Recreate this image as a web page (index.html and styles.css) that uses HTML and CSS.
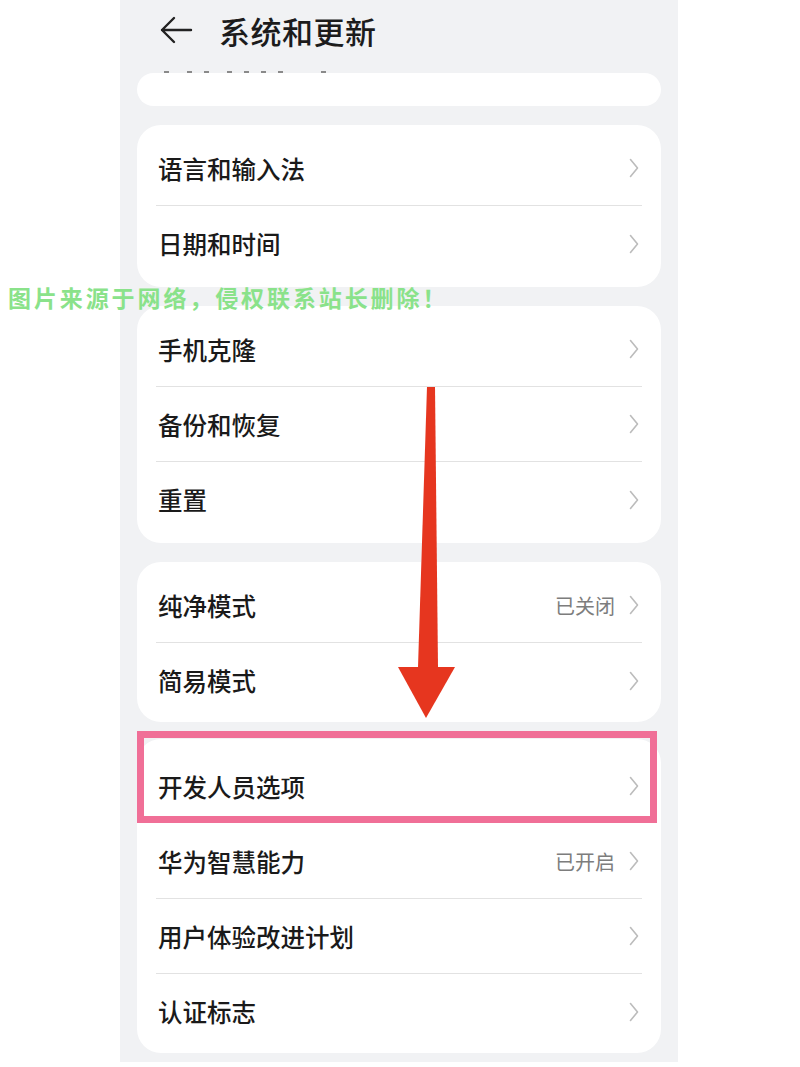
FILE: index.html
```html
<!DOCTYPE html>
<html lang="zh-CN">
<head>
<meta charset="utf-8">
<title>系统和更新</title>
<link rel="stylesheet" href="styles.css">
</head>
<body>
<div class="page">
  <div class="screen">
    <header class="header">
      <svg class="back" width="34" height="28" viewBox="0 0 34 28" aria-hidden="true">
        <path d="M32 14 H3 M15 2 L3 14 L15 26" fill="none" stroke="#222" stroke-width="2.4" stroke-linecap="round" stroke-linejoin="round"/>
      </svg>
      <h1 class="title">系统和更新</h1>
    </header>
    <div class="peek" aria-hidden="true">
      <i class="d"></i><i class="d gap"></i><i class="d"></i><i class="d gap"></i><i class="d"></i><i class="d"></i><i class="d"></i><i class="d gap2"></i>
    </div>
    <div class="card card-top"></div>

    <section class="card">
      <div class="row"><span class="label">语言和输入法</span><span class="chev"></span></div>
      <div class="row"><span class="label">日期和时间</span><span class="chev"></span></div>
    </section>

    <section class="card">
      <div class="row"><span class="label">手机克隆</span><span class="chev"></span></div>
      <div class="row"><span class="label">备份和恢复</span><span class="chev"></span></div>
      <div class="row"><span class="label">重置</span><span class="chev"></span></div>
    </section>

    <section class="card card-short">
      <div class="row"><span class="label">纯净模式</span><span class="value">已关闭</span><span class="chev"></span></div>
      <div class="row"><span class="label">简易模式</span><span class="chev"></span></div>
    </section>

    <section class="card card-last">
      <div class="row row-nodiv"><span class="label">开发人员选项</span><span class="chev"></span></div>
      <div class="row"><span class="label">华为智慧能力</span><span class="value">已开启</span><span class="chev"></span></div>
      <div class="row"><span class="label">用户体验改进计划</span><span class="chev"></span></div>
      <div class="row"><span class="label">认证标志</span><span class="chev"></span></div>
    </section>

    <div class="highlight"></div>
    <svg class="arrow" width="80" height="340" viewBox="0 0 80 340" aria-hidden="true">
      <polygon points="35,0 43,0 46,280 26,280" fill="#e6361f"/>
      <polygon points="6,280 63,280 34,331" fill="#e6361f"/>
    </svg>
  </div>
  <div class="watermark">图片来源于网络，侵权联系站长删除！</div>
</div>
</body>
</html>
```

FILE: styles.css
```css
html, body {
  margin: 0;
  padding: 0;
  background: #ffffff;
}
.page {
  position: relative;
  width: 800px;
  height: 1067px;
  overflow: hidden;
  font-family: "Noto Sans CJK SC", "Noto Sans", sans-serif;
}
.screen {
  position: relative;
  margin-left: 120px;
  width: 558px;
  height: 1062px;
  background: #f1f2f4;
  overflow: hidden;
}
.header {
  height: 70px;
  display: flex;
  align-items: center;
  padding-left: 39px;
  gap: 26px;
}
.back {
  display: block;
  margin-top: -10px;
}
.title {
  margin: 0;
  margin-top: -10px;
  font-size: 31px;
  font-weight: 500;
  color: #1c1c1c;
  letter-spacing: 0.5px;
}
.peek {
  height: 3px;
  display: flex;
  align-items: center;
  gap: 12px;
  padding-left: 44px;
}
.d {
  display: block;
  width: 5px;
  height: 2px;
  background: #8a8a8a;
}
.d.gap {
  margin-left: 6px;
}
.d.gap2 {
  margin-left: 26px;
}
.card {
  margin: 19px 17px 0 17px;
  background: #ffffff;
  border-radius: 24px;
  padding: 6px 19px;
}
.card-top {
  margin-top: 0;
  height: 33px;
  padding: 0;
  border-radius: 18px;
}
.card-short {
  padding-bottom: 4px;
}
.card-last {
  margin-top: 17px;
  padding-top: 10px;
  padding-bottom: 4px;
}
.row {
  box-sizing: border-box;
  height: 75px;
  display: flex;
  align-items: center;
  border-bottom: 1px solid #e2e2e2;
}
.row:last-child {
  border-bottom: none;
}
.row-nodiv {
  border-bottom-color: transparent;
}
.label {
  flex: 1;
  font-size: 24.5px;
  font-weight: 500;
  color: #1a1a1a;
  padding-left: 2px;
}
.value {
  font-size: 20px;
  color: #7d7d7d;
  margin-right: 14px;
}
.chev {
  width: 10px;
  height: 20px;
  margin-right: 3px;
  background: no-repeat center / 10px 20px url("data:image/svg+xml;utf8,<svg xmlns='http://www.w3.org/2000/svg' width='10' height='20' viewBox='0 0 10 20'><polyline points='1.5,1.5 8.5,10 1.5,18.5' fill='none' stroke='%23bcbcbc' stroke-width='1.6' stroke-linecap='round' stroke-linejoin='round'/></svg>");
}
.highlight {
  position: absolute;
  left: 17px;
  top: 731px;
  width: 506px;
  height: 78px;
  border: 7px solid #f06f97;
}
.arrow {
  position: absolute;
  left: 272px;
  top: 387px;
}
.watermark {
  position: absolute;
  left: 8px;
  top: 280px;
  font-size: 23px;
  font-weight: 700;
  color: #8ae28a;
  letter-spacing: 2.9px;
  white-space: nowrap;
}
```
